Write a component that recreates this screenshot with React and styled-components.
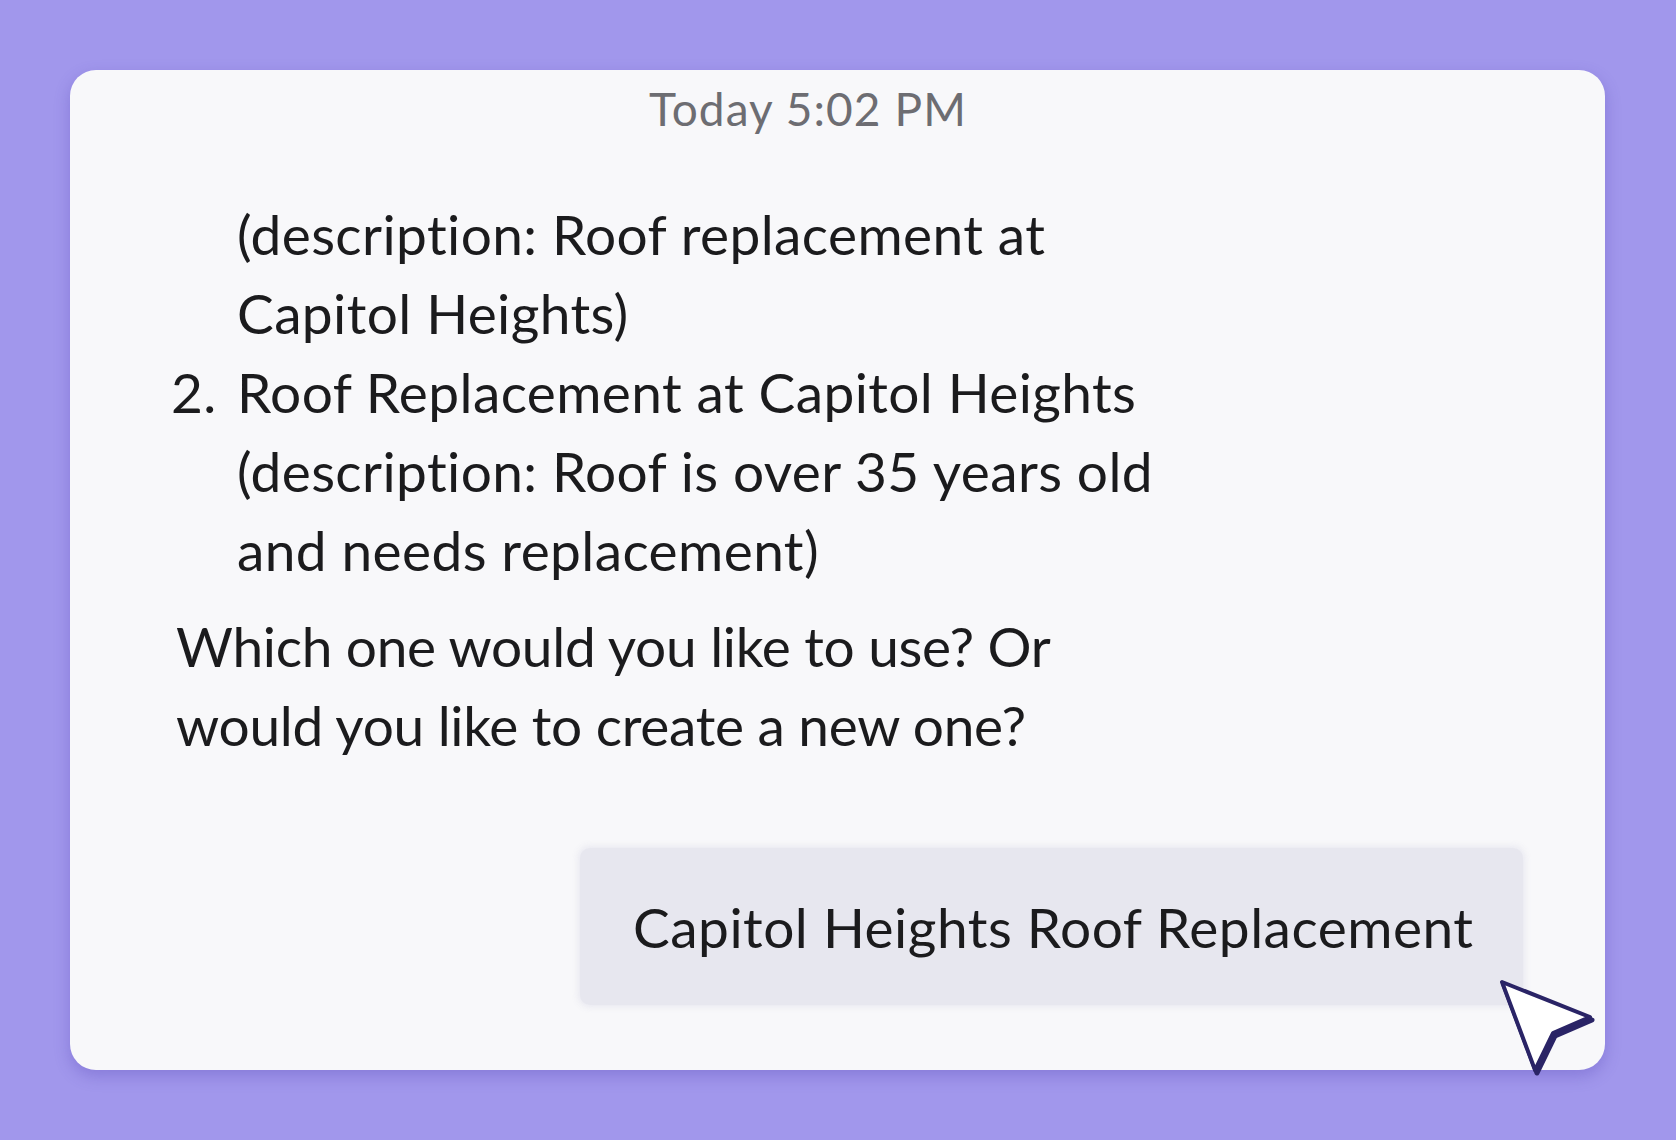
import React from 'react';
import styled, { createGlobalStyle } from 'styled-components';

const GlobalStyle = createGlobalStyle`
  html, body {
    margin: 0;
    padding: 0;
    background: #a197ec;
  }
  body {
    font-family: 'Lato', 'Liberation Sans', sans-serif;
    font-variant-ligatures: none;
    width: 1676px;
    height: 1140px;
    overflow: hidden;
  }
`;

const Page = styled.main`
  box-sizing: border-box;
  width: 1676px;
  height: 1140px;
  padding: 70px 71px 70px 70px;
  background: #a197ec;
`;

const Card = styled.section`
  position: relative;
  box-sizing: border-box;
  height: 1000px;
  background: #f8f8fa;
  border-radius: 26px;
  box-shadow: 0 6px 16px rgba(70, 50, 170, 0.28);
  display: flex;
  flex-direction: column;
  padding: 4px 82px 0 101px;
`;

const Timestamp = styled.div`
  padding-left: 478px;
  font-size: 46px;
  line-height: 70px;
  color: #6d6d72;
  letter-spacing: 1.1px;
`;

const Message = styled.div`
  margin-top: 51px;
  display: flex;
  flex-direction: column;
  font-size: 55px;
  line-height: 79px;
  letter-spacing: 0.4px;
  color: #1b1b1d;
`;

const Item = styled.div`
  display: grid;
  grid-template-columns: 66px 1fr;
`;

const Num = styled.span`
  white-space: pre;
`;

const Question = styled.p`
  margin: 17px 0 0 5px;
  font-size: 55px;
  line-height: 79px;
  letter-spacing: -0.3px;
  color: #1b1b1d;
`;

const Reply = styled.div`
  margin-top: 83px;
  display: flex;
  justify-content: flex-end;
`;

const Bubble = styled.div`
  box-sizing: border-box;
  width: 943px;
  height: 157px;
  display: flex;
  align-items: center;
  padding-left: 53px;
  background: #e7e7ef;
  border-radius: 10px;
  box-shadow: 0 0 6px 2px rgba(231, 231, 239, 0.9);
  font-size: 55px;
  letter-spacing: 0.5px;
  color: #1b1b1d;
`;

const Cursor = styled.svg`
  position: absolute;
  left: 1420px;
  top: 900px;
  width: 110px;
  height: 110px;
  overflow: visible;
`;

const Pointer = () => (
  <Cursor viewBox="0 0 110 110">
    <path
      d="M14 15 L102 50 L65 66 L47 103 Z"
      fill="#2a2466"
      stroke="#2a2466"
      strokeWidth="5"
      strokeLinejoin="round"
    />
    <path
      d="M12 12 L100 47 L63 63 L45 100 Z"
      fill="#ffffff"
      stroke="#2a2466"
      strokeWidth="4"
      strokeLinejoin="round"
    />
  </Cursor>
);

export default function App() {
  return (
    <>
      <GlobalStyle />
      <Page>
        <Card>
          <Timestamp>Today 5:02 PM</Timestamp>
          <Message>
            <Item>
              <Num> </Num>
              <span>
                (description: Roof replacement at
                <br />
                Capitol Heights)
              </span>
            </Item>
            <Item>
              <Num>2.</Num>
              <span>
                Roof Replacement at Capitol Heights
                <br />
                (description: Roof is over 35 years old
                <br />
                and needs replacement)
              </span>
            </Item>
          </Message>
          <Question>
            Which one would you like to use? Or
            <br />
            would you like to create a new one?
          </Question>
          <Reply>
            <Bubble>Capitol Heights Roof Replacement</Bubble>
          </Reply>
          <Pointer />
        </Card>
      </Page>
    </>
  );
}
